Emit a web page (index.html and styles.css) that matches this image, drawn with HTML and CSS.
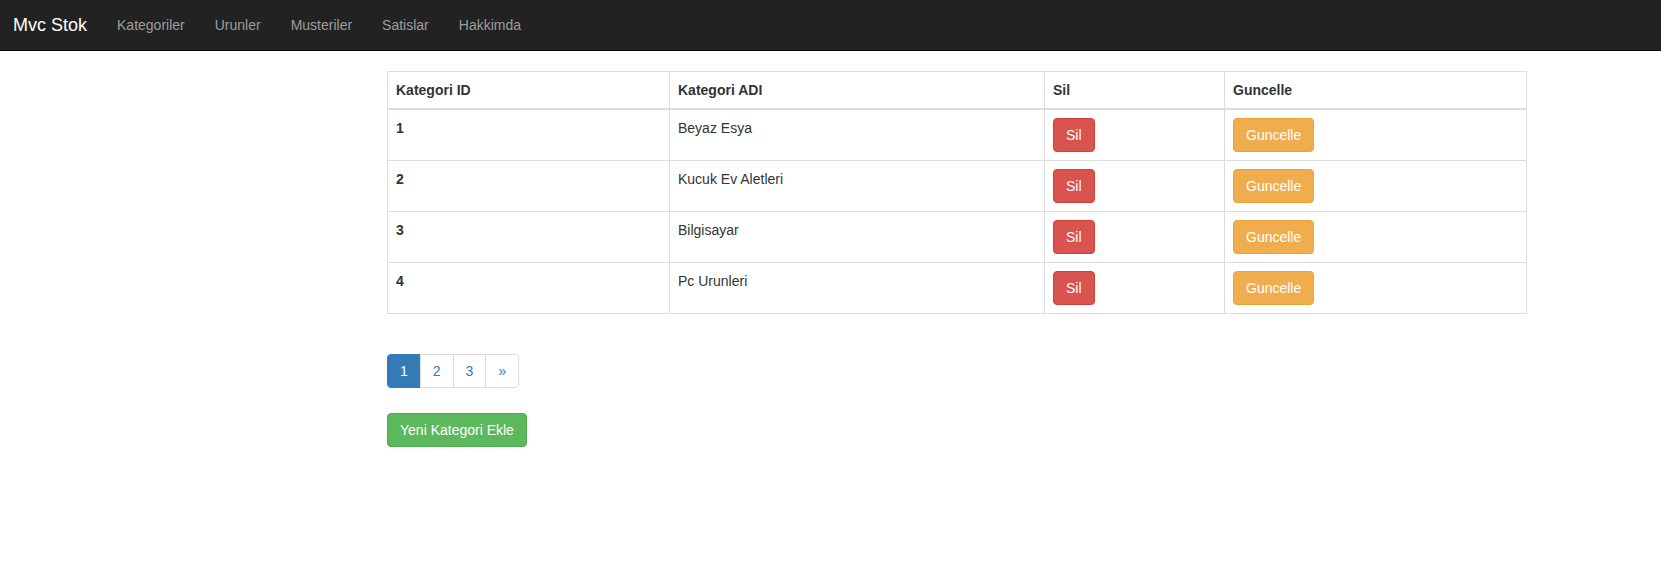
FILE: index.html
```html
<!DOCTYPE html>
<html lang="tr">
<head>
<meta charset="utf-8">
<title>Mvc Stok</title>
<link rel="stylesheet" href="styles.css">
</head>
<body>
<nav class="navbar">
  <a class="brand" href="#">Mvc Stok</a>
  <ul class="nav">
    <li><a href="#">Kategoriler</a></li>
    <li><a href="#">Urunler</a></li>
    <li><a href="#">Musteriler</a></li>
    <li><a href="#">Satislar</a></li>
    <li><a href="#">Hakkimda</a></li>
  </ul>
</nav>
<main class="content">
  <table class="table">
    <colgroup>
      <col class="c1"><col class="c2"><col class="c3"><col class="c4">
    </colgroup>
    <thead>
      <tr><th>Kategori ID</th><th>Kategori ADI</th><th>Sil</th><th>Guncelle</th></tr>
    </thead>
    <tbody>
      <tr><th>1</th><td>Beyaz Esya</td><td><a class="btn btn-danger" href="#">Sil</a></td><td><a class="btn btn-warning" href="#">Guncelle</a></td></tr>
      <tr><th>2</th><td>Kucuk Ev Aletleri</td><td><a class="btn btn-danger" href="#">Sil</a></td><td><a class="btn btn-warning" href="#">Guncelle</a></td></tr>
      <tr><th>3</th><td>Bilgisayar</td><td><a class="btn btn-danger" href="#">Sil</a></td><td><a class="btn btn-warning" href="#">Guncelle</a></td></tr>
      <tr><th>4</th><td>Pc Urunleri</td><td><a class="btn btn-danger" href="#">Sil</a></td><td><a class="btn btn-warning" href="#">Guncelle</a></td></tr>
    </tbody>
  </table>
  <ul class="pagination">
    <li class="active"><a href="#">1</a></li>
    <li><a href="#">2</a></li>
    <li><a href="#">3</a></li>
    <li><a href="#">»</a></li>
  </ul>
  <div class="actions">
    <a class="btn btn-success" href="#">Yeni Kategori Ekle</a>
  </div>
</main>
</body>
</html>
```
FILE: styles.css
```css
* { box-sizing: border-box; }
html, body { margin: 0; padding: 0; }
body {
  font-family: "Liberation Sans", Arial, Helvetica, sans-serif;
  font-size: 14px;
  line-height: 20px;
  color: #333;
  background: #fff;
}
a { text-decoration: none; }

.navbar {
  display: flex;
  align-items: center;
  height: 51px;
  background: #222;
  border-bottom: 1px solid #080808;
  margin-bottom: 20px;
}
.brand {
  font-size: 18px;
  line-height: 20px;
  padding: 15px 15px 15px 13px;
  color: #fff;
}
.nav {
  display: flex;
  list-style: none;
  margin: 0;
  padding: 0;
}
.nav a {
  display: block;
  padding: 15px;
  color: #9d9d9d;
  line-height: 20px;
}

.content {
  display: flex;
  flex-direction: column;
  align-items: flex-start;
  padding-left: 387px;
  width: 1526px;
}

.table {
  width: 1139px;
  border-collapse: collapse;
  border: 1px solid #ddd;
  table-layout: fixed;
  margin-bottom: 20px;
}
.c1 { width: 282px; }
.c2 { width: 375px; }
.c3 { width: 180px; }
.c4 { width: 302px; }
.table th, .table td {
  border: 1px solid #ddd;
  padding: 8px;
  text-align: left;
  vertical-align: top;
  line-height: 20px;
}
.table th { font-weight: bold; }
.table thead th {
  vertical-align: bottom;
  border-bottom-width: 2px;
}

.btn {
  display: inline-block;
  padding: 6px 12px;
  font-size: 14px;
  line-height: 20px;
  border: 1px solid transparent;
  border-radius: 4px;
  color: #fff;
  vertical-align: middle;
}
.btn-danger { background: #d9534f; border-color: #d43f3a; }
.btn-warning { background: #f0ad4e; border-color: #eea236; }
.btn-success { background: #5cb85c; border-color: #4cae4c; }

.pagination {
  display: flex;
  list-style: none;
  margin: 20px 0;
  padding: 0;
}
.pagination li a {
  display: block;
  padding: 6px 12px;
  line-height: 20px;
  color: #337ab7;
  background: #fff;
  border: 1px solid #ddd;
  margin-left: -1px;
}
.pagination li:first-child a {
  margin-left: 0;
  border-radius: 4px 0 0 4px;
}
.pagination li:last-child a { border-radius: 0 4px 4px 0; }
.pagination li.active a {
  background: #337ab7;
  border-color: #337ab7;
  color: #fff;
}

.actions { padding-top: 5px; }
```
